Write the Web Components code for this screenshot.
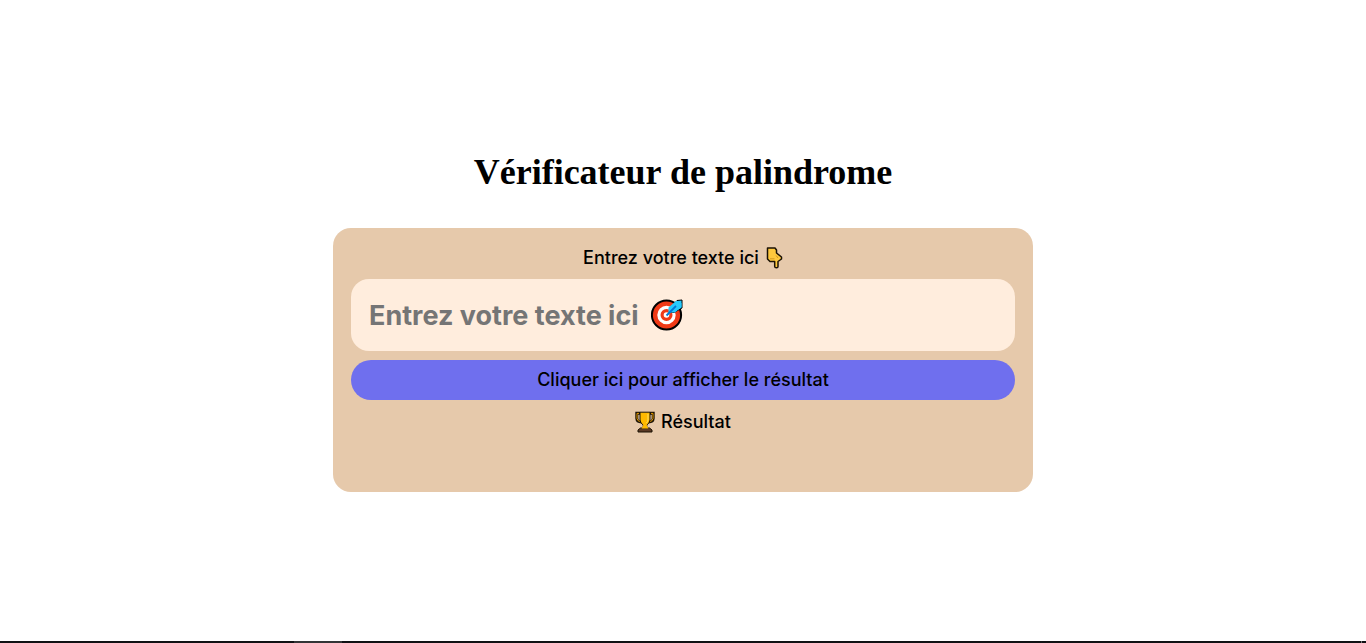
<!DOCTYPE html>
<html lang="fr">
<head>
<meta charset="utf-8">
<meta name="viewport" content="width=device-width, initial-scale=1">
<title>Vérificateur de palindrome</title>
<style>
body { margin: 0; background: #fff; color: #000; font-family: Inter, "Noto Sans", sans-serif; }
</style>
</head>
<body>
<palindrome-page>
  <span slot="title">Vérificateur de palindrome</span>
  <palindrome-card></palindrome-card>
</palindrome-page>
<script>
const icons = {
  hand: `<path d="M2.5 1H10L11.5 3V6L16.5 10V12L13 14.5V19.5Q13 20.8 11.5 20.8Q9.7 20.8 9.7 19.5V14.5H5L2.5 12Z" fill="#ffc83d" stroke="#1b1205" stroke-width="1.5" stroke-linejoin="round"/><path d="M5 11.8H9.5M11 8.5 13 11" fill="none" stroke="#c98a16" stroke-width=".8"/>`,
  target: `<circle cx="15.5" cy="17" r="14.6" fill="#f03a17" stroke="#000" stroke-width="2"/><circle cx="15.5" cy="17" r="7.6" fill="none" stroke="#fff" stroke-width="3.2"/><circle cx="15.5" cy="17" r="2.8" fill="#fff"/><path d="M19 10.5 26 2.5 31 2V6L31 10 23 14.5 19 14Z" fill="#26c9fc" stroke="#000" stroke-width="1"/><path d="M17.5 13.5V9.5L25 3H29V5H30.5V9L24 14.5H20L16 18" fill="#26c9fc"/><path d="M15.5 17.5 25 8" stroke="#0078d7" stroke-width="1.8" fill="none"/>`,
  trophy: `<path d="M5 2.2H1.8V7.5Q2 11 6.5 11M15 2.2H18.2V7.5Q18 11 13.5 11" fill="none" stroke="#1b1205" stroke-width="3"/><path d="M4 2.4H2V7.5Q2.5 10.6 6 10.6M16 2.4H18V7.5Q17.5 10.6 14 10.6" fill="none" stroke="#e79b00" stroke-width="1"/><path d="M5 1.2H15V9Q14.5 12.5 11.8 14V17.5H8.2V14Q5.5 12.5 5 9Z" fill="#ffb900" stroke="#1b1205" stroke-width="1"/><path d="M13 3V9Q12.5 11 11.5 12" fill="none" stroke="#ffdf67"/><path d="M5.5 17H14.5L17 19V21H3V19Z" fill="#5a3925" stroke="#1b1205"/><path d="M9 13H11L13.5 17.5H6.5Z" fill="#ffb900"/>`
};
const boxes = { hand: "0 0 18 22", target: "0 0 32 33", trophy: "0 0 20 22" };

class EmojiIcon extends HTMLElement {
  constructor() {
    super();
    const name = this.getAttribute("name");
    this.attachShadow({ mode: "open" }).innerHTML = `
      <style>
        :host { display: inline-flex; }
        svg { width: 100%; height: 100%; display: block; }
      </style>
      <svg viewBox="${boxes[name]}" aria-hidden="true">${icons[name]}</svg>`;
  }
}
customElements.define("emoji-icon", EmojiIcon);

class PalindromeCard extends HTMLElement {
  constructor() {
    super();
    const root = this.attachShadow({ mode: "open" });
    root.innerHTML = `
      <style>
        :host { display: block; width: 100%; max-width: 700px; font-size: 18px; font-weight: 500; line-height: 26px; }
        * { box-sizing: border-box; }
        form { display: flex; flex-direction: column; gap: 9px; padding: 16px 18px 18px; border-radius: 18px; background: #e6c9ab; }
        label, .result { display: flex; justify-content: center; align-items: center; gap: 6px; }
        label { padding-top: 2px; line-height: 24px; }
        .hand { width: 18px; height: 22px; }
        .trophy { width: 20px; height: 22px; }
        .field { position: relative; }
        input { display: block; width: 100%; height: 72px; padding: 0 18px; border: 0; border-radius: 18px; background: #ffeddd; color: #000; font: inherit; font-size: 27px; font-weight: 700; outline: 0; }
        input::placeholder { color: #757575; opacity: 1; }
        .target { position: absolute; left: 300px; top: 19px; width: 32px; height: 33px; pointer-events: none; }
        input:not(:placeholder-shown) + .target { display: none; }
        button { height: 40px; padding: 0 18px; border: 0; border-radius: 20px; background: #6f6fee; color: #000; font: inherit; cursor: pointer; }
        output { display: block; min-height: 30px; text-align: center; }
      </style>
      <form>
        <label for="text">Entrez votre texte ici <emoji-icon class="hand" name="hand"></emoji-icon></label>
        <div class="field">
          <input id="text" type="text" placeholder="Entrez votre texte ici" autocomplete="off">
          <emoji-icon class="target" name="target"></emoji-icon>
        </div>
        <button type="submit">Cliquer ici pour afficher le résultat</button>
        <div class="result"><emoji-icon class="trophy" name="trophy"></emoji-icon> Résultat</div>
        <output for="text"></output>
      </form>`;
    root.querySelector("form").addEventListener("submit", event => {
      event.preventDefault();
      const text = root.querySelector("input").value.trim();
      const plain = text.normalize("NFD").toLowerCase().replace(/[^a-z0-9]/g, "");
      root.querySelector("output").textContent = plain
        ? `${text} ${plain === [...plain].reverse().join("") ? "est" : "n’est pas"} un palindrome` : "";
    });
  }
}
customElements.define("palindrome-card", PalindromeCard);

class PalindromePage extends HTMLElement {
  constructor() {
    super();
    this.attachShadow({ mode: "open" }).innerHTML = `
      <style>
        :host { display: flex; flex-direction: column; min-height: 100vh; }
        main { flex: 1; display: flex; flex-direction: column; align-items: center; justify-content: center; gap: 35px; padding: 2px 16px 0; }
        h1 { margin: 0; font: bold 36px/42px "Liberation Serif", serif; text-align: center; }
        footer { display: flex; justify-content: space-between; height: 2px; padding: 0 4px 0 294px; background: #101114; }
        .tab { width: 48px; background: #333436; }
        .edge { width: 1px; background: #77787a; }
      </style>
      <main><h1><slot name="title"></slot></h1><slot></slot></main>
      <footer><span class="tab"></span><span class="edge"></span></footer>`;
  }
}
customElements.define("palindrome-page", PalindromePage);
</script>
</body>
</html>
